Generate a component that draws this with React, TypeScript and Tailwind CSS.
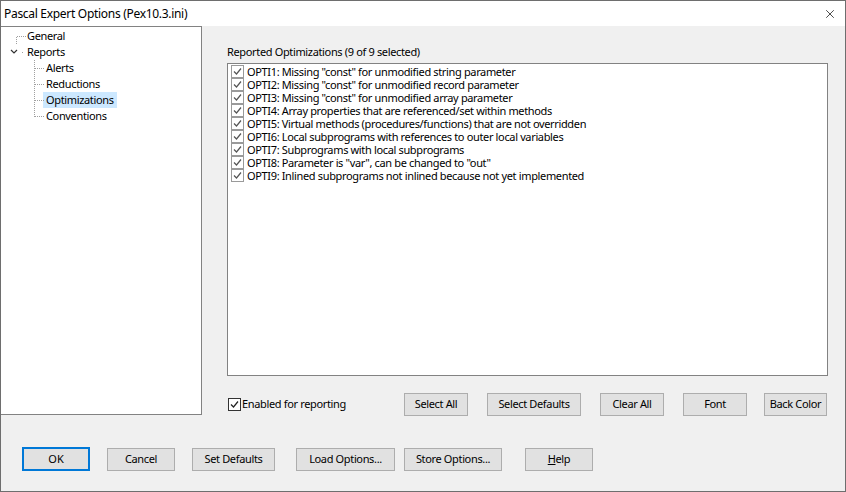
import { X } from 'lucide-react';

const items = [
  'OPTI1: Missing "const" for unmodified string parameter',
  'OPTI2: Missing "const" for unmodified record parameter',
  'OPTI3: Missing "const" for unmodified array parameter',
  'OPTI4: Array properties that are referenced/set within methods',
  'OPTI5: Virtual methods (procedures/functions) that are not overridden',
  'OPTI6: Local subprograms with references to outer local variables',
  'OPTI7: Subprograms with local subprograms',
  'OPTI8: Parameter is "var", can be changed to "out"',
  'OPTI9: Inlined subprograms not inlined because not yet implemented',
];

function Check({ dark }: { dark?: boolean }) {
  return (
    <svg width="13" height="13" viewBox="0 0 13 13" className="shrink-0">
      <rect x="0.5" y="0.5" width="12" height="12" fill="white" stroke={dark ? '#333333' : '#9a9a9a'} />
      <polyline points="3,6.5 5.5,9 10,3.5" fill="none" stroke={dark ? '#222222' : '#555555'} strokeWidth="1.2" />
    </svg>
  );
}

function Btn({ label, w, className = '' }: { label: React.ReactNode; w: string; className?: string }) {
  return (
    <button className={`h-[23px] ${w} bg-[#e1e1e1] border border-[#adadad] text-[11px] tracking-[-0.35px] text-black flex items-center justify-center ${className}`}>
      {label}
    </button>
  );
}

export default function App() {
  return (
    <div
      className="w-[846px] h-[492px] border border-[#6e6e6e] bg-[#f0f0f0] flex flex-col text-black overflow-hidden"
      style={{ fontFamily: '"Noto Sans", "Open Sans", sans-serif' }}
    >
      {/* title bar */}
      <div className="h-[25px] bg-white flex items-center justify-between pl-[3px] pr-[8px] shrink-0">
        <span className="text-[12px] tracking-[-0.3px]">Pascal Expert Options (Pex10.3.ini)</span>
        <X className="w-[14px] h-[14px]" strokeWidth={1.2} />
      </div>

      <div className="flex items-start">
        {/* tree */}
        <div className="relative w-[201px] h-[389px] bg-white border-t border-r border-b border-[#828282] shrink-0 text-[11px] tracking-[-0.35px]">
          <svg className="absolute left-0 top-0" width="60" height="120" viewBox="0 0 60 120">
            <g stroke="#a0a0a0" strokeDasharray="1 1" fill="none">
              <line x1="15.5" y1="10" x2="15.5" y2="17" />
              <line x1="16" y1="9.5" x2="25" y2="9.5" />
              <line x1="21" y1="25.5" x2="23" y2="25.5" />
              <line x1="33.5" y1="33" x2="33.5" y2="90" />
              <line x1="34" y1="41.5" x2="44" y2="41.5" />
              <line x1="34" y1="57.5" x2="44" y2="57.5" />
              <line x1="34" y1="73.5" x2="44" y2="73.5" />
              <line x1="34" y1="89.5" x2="44" y2="89.5" />
            </g>
            <polyline points="10,23 13,26 16,23" fill="none" stroke="#333" strokeWidth="1.2" />
          </svg>
          <div className="flex flex-col pt-[1px]">
            <div className="h-[16px] pl-[26px] flex items-center">General</div>
            <div className="h-[16px] pl-[26px] flex items-center">Reports</div>
            <div className="h-[16px] pl-[45px] flex items-center">Alerts</div>
            <div className="h-[16px] pl-[45px] flex items-center">Reductions</div>
            <div className="h-[16px] pl-[42px] flex items-center">
              <span className="bg-[#cce8ff] px-[3px] h-[16px] flex items-center">Optimizations</span>
            </div>
            <div className="h-[16px] pl-[45px] flex items-center">Conventions</div>
          </div>
        </div>

        {/* right panel */}
        <div className="flex-1 flex flex-col pl-[25px] pr-[17px] pt-[19px] text-[11px] tracking-[-0.35px]">
          <div className="h-[14px] leading-[14px] mb-[4px]">Reported Optimizations (9 of 9 selected)</div>
          <div className="h-[313px] bg-white border border-[#828282] pt-[1px] pl-[3px]">
            {items.map((t) => (
              <div key={t} className="h-[13px] flex items-center gap-[3px] leading-[13px]">
                <Check />
                <span className="leading-[12px]">{t}</span>
              </div>
            ))}
          </div>
          <div className="flex items-center mt-[17px]">
            <div className="w-[177px] flex items-center gap-[1px] pl-[1px]">
              <Check dark />
              <span>Enabled for reporting</span>
            </div>
            <Btn label="Select All" w="w-[64px]" />
            <Btn label="Select Defaults" w="w-[94px]" className="ml-[19px]" />
            <Btn label="Clear All" w="w-[64px]" className="ml-[19px]" />
            <Btn label="Font" w="w-[64px]" className="ml-[19px]" />
            <Btn label="Back Color" w="w-[63px]" className="ml-[17px]" />
          </div>
        </div>
      </div>

      {/* footer */}
      <div className="flex items-center pl-[21px] pt-[31px]">
        <button className="h-[24px] w-[68px] bg-[#e1e1e1] border-2 border-[#0078d7] text-[11px] flex items-center justify-center">OK</button>
        <Btn label="Cancel" w="w-[68px]" className="ml-[17px]" />
        <Btn label="Set Defaults" w="w-[83px]" className="ml-[17px]" />
        <Btn label="Load Options..." w="w-[99px]" className="ml-[21px]" />
        <Btn label="Store Options..." w="w-[98px]" className="ml-[9px]" />
        <Btn label={<span><u>H</u>elp</span>} w="w-[68px]" className="ml-[23px]" />
      </div>
    </div>
  );
}
